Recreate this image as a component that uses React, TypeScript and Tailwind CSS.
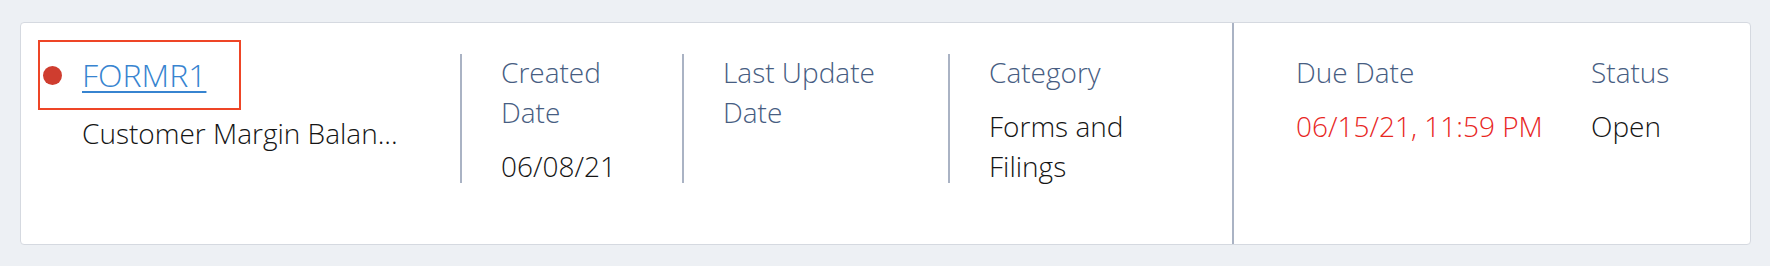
import React from 'react';

interface Field {
  label: string;
  value?: string;
  width: string;
  divider?: boolean;
  valueClass?: string;
}

const leftFields: Field[] = [
  { label: 'Created Date', value: '06/08/21', width: 'w-[222px]', divider: true },
  { label: 'Last Update Date', width: 'w-[266px]', divider: true },
  { label: 'Category', value: 'Forms and Filings', width: 'w-[285px]', divider: true },
];

const rightFields: Field[] = [
  { label: 'Due Date', value: '06/15/21, 11:59 PM', width: 'w-[295px]', valueClass: 'text-[#e8271f]' },
  { label: 'Status', value: 'Open', width: 'w-[150px]' },
];

const FieldColumn: React.FC<{ field: Field }> = ({ field }) => (
  <div
    className={`${field.width} shrink-0 h-[129px] ${
      field.divider ? 'border-l-2 border-[#aab3c4] pl-[39px] pr-[40px]' : 'pr-[20px]'
    }`}
  >
    <div className="-mt-[2px] text-[28px] leading-[40px] text-[#475d82]">{field.label}</div>
    {field.value && (
      <div className={`mt-[14px] text-[28px] leading-[40px] ${field.valueClass ?? 'text-[#151515]'}`}>
        {field.value}
      </div>
    )}
  </div>
);

export default function App() {
  return (
    <div
      className="w-full h-[266px] bg-[#edf0f4] pt-[22px] pl-[20px] pr-[19px] font-light"
      style={{ fontFamily: '"Open Sans", "Noto Sans", sans-serif' }}
    >
      <div className="flex h-[223px] bg-white border border-[#d5d9e0] rounded-[4px]">
        {/* summary side */}
        <div className="flex w-[1213px] shrink-0 border-r-2 border-[#aab3c4]">
          <div className="w-[439px] shrink-0 pl-[17px] pt-[17px]">
            <div className="flex items-center w-[203px] h-[70px] border-[2.5px] border-[#ee4526] pl-[3px]">
              <span className="w-[19px] h-[19px] rounded-full bg-[#cf3d2f]" />
              <a
                href="#"
                className="ml-[20px] text-[32px] leading-[44px] text-[#3784d0] underline decoration-[2px] underline-offset-[4px]"
              >
                FORMR1
              </a>
            </div>
            <div className="mt-[3px] pl-[44px] text-[28px] leading-[40px] text-[#151515] whitespace-nowrap">
              Customer Margin Balan...
            </div>
          </div>
          <div className="flex pt-[31px]">
            {leftFields.map((f) => (
              <FieldColumn key={f.label} field={f} />
            ))}
          </div>
        </div>

        {/* due side */}
        <div className="flex pl-[62px] pt-[31px]">
          {rightFields.map((f) => (
            <FieldColumn key={f.label} field={f} />
          ))}
        </div>
      </div>
    </div>
  );
}
